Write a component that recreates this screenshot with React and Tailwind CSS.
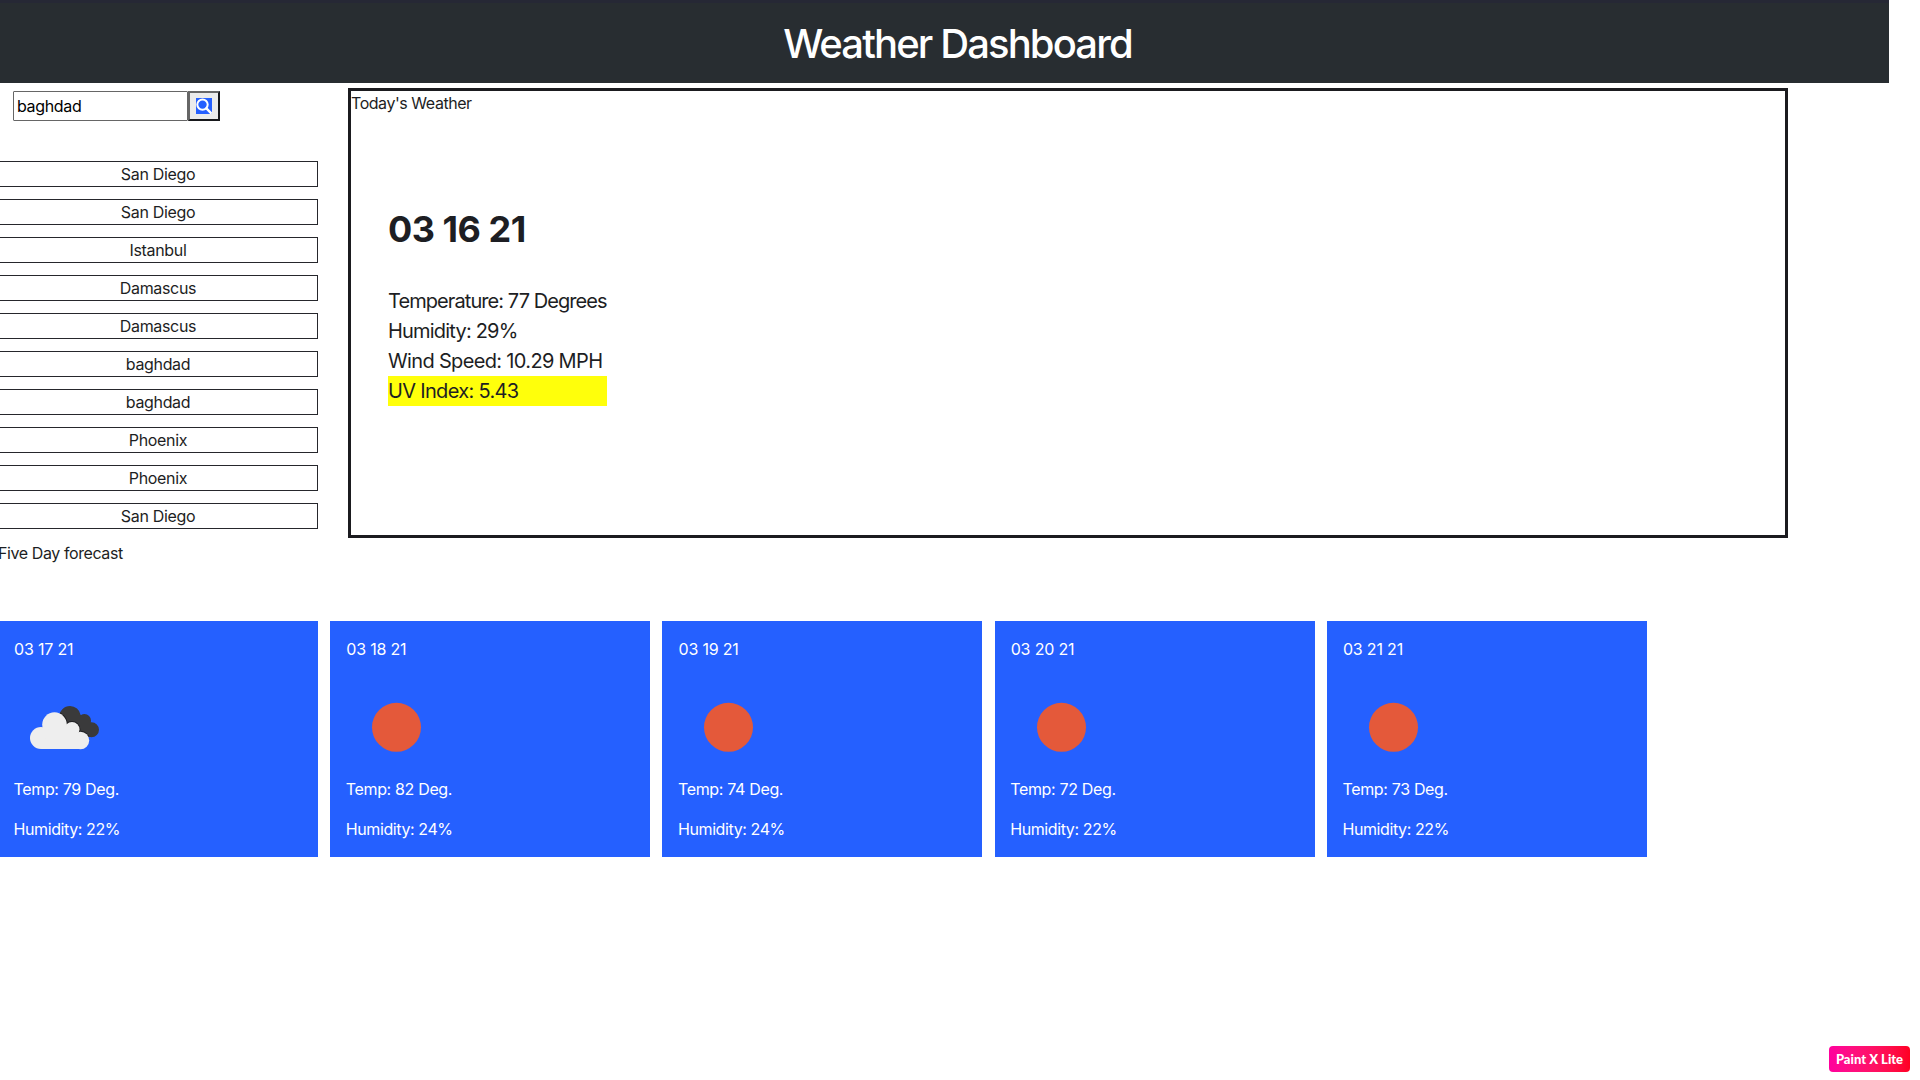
const cities = ['San Diego', 'San Diego', 'Istanbul', 'Damascus', 'Damascus', 'baghdad', 'baghdad', 'Phoenix', 'Phoenix', 'San Diego'];

const days = [
  { date: '03 17 21', icon: 'cloud', temp: 79, humidity: 22 },
  { date: '03 18 21', icon: 'sun', temp: 82, humidity: 24 },
  { date: '03 19 21', icon: 'sun', temp: 74, humidity: 24 },
  { date: '03 20 21', icon: 'sun', temp: 72, humidity: 22 },
  { date: '03 21 21', icon: 'sun', temp: 73, humidity: 22 },
];

function SearchIcon() {
  return (
    <svg className="block size-4 bg-[#2560ff]" viewBox="0 0 16 16" fill="none" stroke="#fff">
      <circle cx="6.5" cy="6.6" r="5.2" strokeWidth="2" />
      <path d="M10.4 10.4 14.8 14.8" strokeWidth="2.4" strokeLinecap="round" />
    </svg>
  );
}

function FrontCloud() {
  return (
    <>
      <circle cx="40.500" cy="47.600" r="12.300" />
      <circle cx="27" cy="61" r="11" />
      <circle cx="58" cy="52.500" r="7.500" />
      <circle cx="66.500" cy="63.500" r="8.700" />
      <path d="M27 72h39.500V60L58 50H36z" />
    </>
  );
}

function WeatherIcon({ type }) {
  return (
    <svg className="block size-[100px]" viewBox="0 0 100 100">
      {type === 'sun' ? (
        <circle cx="50.500" cy="50.300" r="24.5" fill="#e4593a" />
      ) : (
        <>
          <clipPath id="back-cloud">
            <circle cx="56" cy="39.800" r="10.800" />
            <circle cx="70.500" cy="43.500" r="6.500" />
            <circle cx="77.500" cy="52.700" r="7.500" />
            <path d="M56 38h14l5 22H58z" />
          </clipPath>
          <g clipPath="url(#back-cloud)">
            <rect width="100" height="100" fill="#3a3a3b" />
            <g stroke="#202022" strokeWidth="2"><FrontCloud /></g>
          </g>
          <g fill="#eee"><FrontCloud /></g>
        </>
      )}
    </svg>
  );
}

function DayCard({ day, first }) {
  return (
    <article className={`flex h-[236px] flex-col bg-[#2560ff] pt-4 text-white ${first ? 'w-[318px] pl-[14px]' : 'w-[320px] pl-4'}`}>
      <p className="tracking-[-0.18px]">{day.date}</p>
      <div className="mt-4 h-[100px]"><WeatherIcon type={day.icon} /></div>
      <p className="-ml-[0.5px]">Temp: {day.temp} Deg.</p>
      <p className="-ml-[0.5px] mt-4 tracking-[-0.4px]">Humidity: {day.humidity}%</p>
    </article>
  );
}

export default function App() {
  return (
    <div className="flex h-[1080px] w-[1920px] flex-col overflow-hidden bg-white font-[Inter,sans-serif] text-base leading-6 tracking-[-0.34px] text-[#1d1e23]">
      <header className="flex h-[83px] w-[1889px] justify-center border-t-[3px] border-[#262835] bg-[#282d31] pl-[26px] pt-[17px]">
        <h1 className="text-[40px] font-[550] leading-[48px] tracking-[-1.88px] text-white">Weather Dashboard</h1>
      </header>
      <div className="flex h-[455px] items-start">
        <aside className="w-[348px] pt-2">
          <form className="flex pl-[13px]">
            <input defaultValue="baghdad" aria-label="City" className="h-[30px] w-[175px] rounded-[1px] border border-[#666] pl-[3px] text-black outline-none" />
            <button type="button" aria-label="Search" className="flex h-[30px] w-8 items-center justify-center border-2 border-b-[#17181b] border-l-[#666] border-r-[#17181b] border-t-[#666] bg-[#ebebeb]"><SearchIcon /></button>
          </form>
          <ul className="mt-10 flex w-[318px] flex-col gap-3">
            {cities.map((city, i) => (
              <li key={i} className="h-[26px] border border-l-0 border-[#26272c] pr-px text-center">{city}</li>
            ))}
          </ul>
        </aside>
        <section className="mt-[5px] h-[450px] w-[1440px] border-[3px] border-[#1b1b1f]">
          <p className="tracking-[-0.45px]">Today&apos;s Weather</p>
          <div className="ml-[37px] mt-[93px] w-fit text-xl leading-[30px] tracking-[-0.92px]">
            <h2 className="text-[36px] font-bold leading-[43px] tracking-[-0.5px]">03 16 21</h2>
            <p className="mt-[35px]">Temperature: 77 Degrees</p>
            <p className="tracking-[-0.8px]">Humidity: 29%</p>
            <p className="tracking-[-0.66px]">Wind Speed: 10.29 MPH</p>
            <p className="bg-[#ffff0b] tracking-[-0.68px]">UV Index: 5.43</p>
          </div>
        </section>
      </div>
      <p className="-ml-[2px] mt-[3px] tracking-[-0.41px]">Five Day forecast</p>
      <section className="mt-[56px] flex gap-[12.24px]">
        {days.map((day, i) => (
          <DayCard key={day.date} day={day} first={i === 0} />
        ))}
      </section>
      <div className="mb-[8px] ml-auto mr-[10px] mt-auto flex h-[26px] w-[81px] items-center justify-center rounded bg-linear-to-r from-[#ff009d] to-[#ff0020] font-[Lato,sans-serif] text-[13px] font-black tracking-normal text-white">Paint X Lite</div>
    </div>
  );
}
